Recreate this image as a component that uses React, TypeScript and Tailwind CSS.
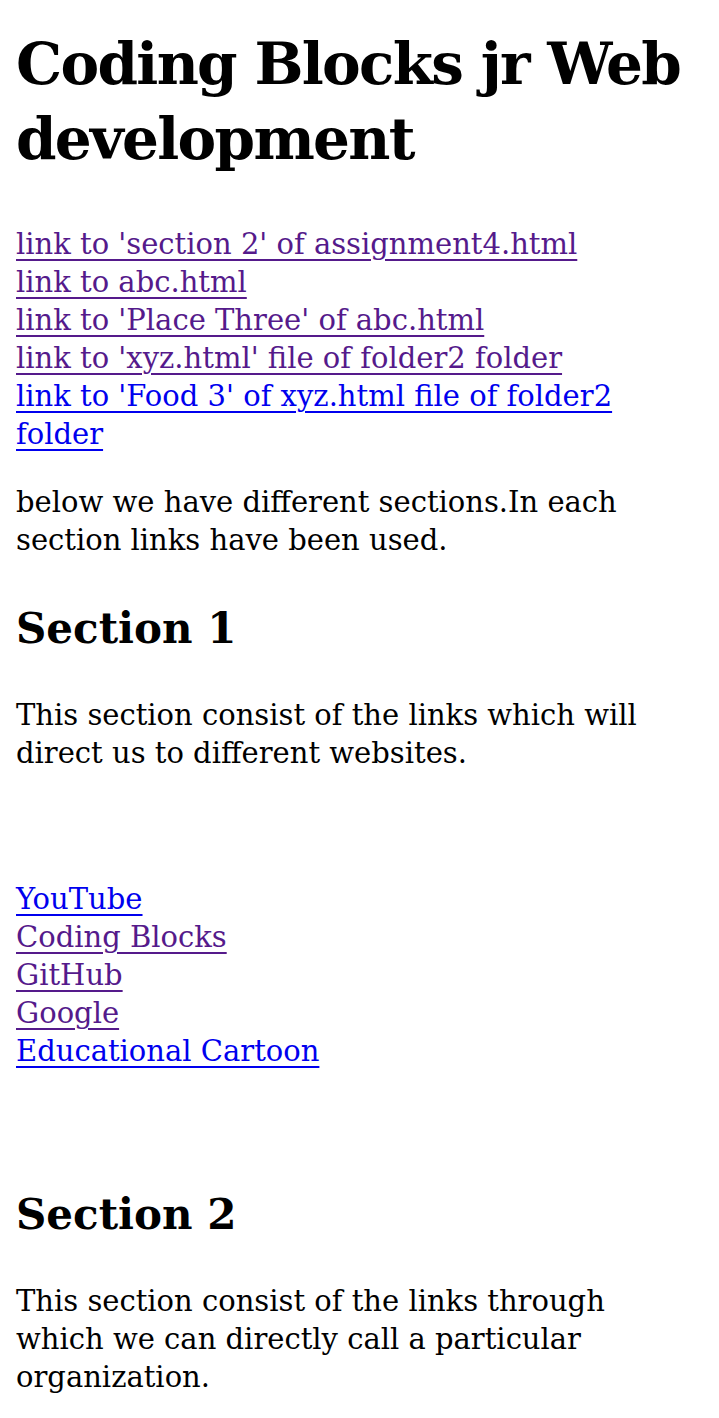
const serif = "font-['DejaVu_Serif','Liberation_Serif',serif]";

const topLinks = [
  { label: "link to 'section 2' of assignment4.html", visited: true },
  { label: "link to abc.html", visited: true },
  { label: "link to 'Place Three' of abc.html", visited: true },
  { label: "link to 'xyz.html' file of folder2 folder", visited: true },
  { label: "link to 'Food 3' of xyz.html file of folder2 folder", visited: false },
];

const siteLinks = [
  { label: "YouTube", visited: false },
  { label: "Coding Blocks", visited: true },
  { label: "GitHub", visited: true },
  { label: "Google", visited: true },
  { label: "Educational Cartoon", visited: false },
];

function Link({ label, visited }: { label: string; visited: boolean }) {
  return (
    <a
      href="#"
      className={`underline decoration-2 underline-offset-[5px] ${
        visited ? "text-[#551a8b]" : "text-[#0000ee]"
      }`}
    >
      {label}
    </a>
  );
}

export default function App() {
  return (
    <div className={`${serif} bg-white text-black min-h-[1418px] pl-4 pr-6 text-[29px] leading-[38px]`}>
      <h1 className="pt-[27px] text-[58px] leading-[75px] font-bold tracking-[-1.7px]">
        Coding Blocks jr Web development
      </h1>

      {/* links to other pages / sections */}
      <div className="mt-[48px] flex flex-col items-start">
        {topLinks.map((l) => (
          <Link key={l.label} {...l} />
        ))}
      </div>

      <p className="mt-[30px]">
        below we have different sections.In each section links have been used.
      </p>

      <h2 className="mt-[41px] text-[42px] leading-[57px] font-bold">Section 1</h2>

      <p className="mt-[39px]">
        This section consist of the links which will direct us to different websites.
      </p>

      <div className="mt-[108px] flex flex-col items-start">
        {siteLinks.map((l) => (
          <Link key={l.label} {...l} />
        ))}
      </div>

      <h2 className="mt-[116px] text-[42px] leading-[57px] font-bold">Section 2</h2>

      <p className="mt-[39px]">
        This section consist of the links through which we can directly call a particular
        organization.
      </p>
    </div>
  );
}
